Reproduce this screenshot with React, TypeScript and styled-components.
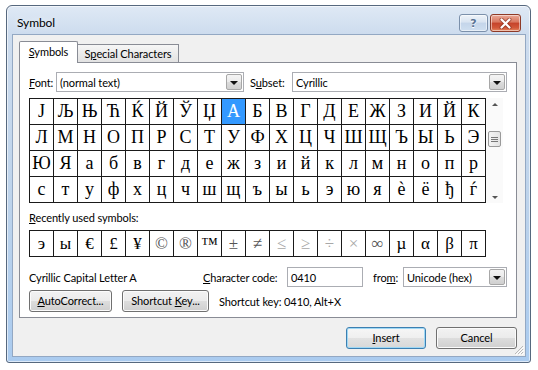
import styled, { createGlobalStyle, css } from "styled-components"

const GlobalStyle = createGlobalStyle`
  body {
    margin: 0;
    background: #fff;
    font-family: Lato, "Noto Sans", sans-serif;
    font-size: 11px;
    letter-spacing: -0.1px;
    color: #000;
  }
`

const symbolRows = [
  "ЈЉЊЋЌЙЎЏАБВГДЕЖЗИЙК",
  "ЛМНОПРСТУФХЦЧШЩЪЫЬЭ",
  "ЮЯабвгдежзийклмнопр",
  "стуфхцчшщъыьэюяѐёђѓ",
]

// tone: 0 = black, 1 = grey, 2 = light grey
const recent: [string, number][] = [
  ["э", 0], ["ы", 0], ["€", 0], ["£", 0], ["¥", 0], ["©", 1], ["®", 1], ["™", 0],
  ["±", 1], ["≠", 1], ["≤", 2], ["≥", 2], ["÷", 2], ["×", 2], ["∞", 1], ["µ", 0],
  ["α", 0], ["β", 0], ["π", 0],
]

const App = () => {
  return (
    <Page>
      <GlobalStyle />
      <Window>
        <TitleBar>
          <Title>Symbol</Title>
          <CaptionButtons>
            <CaptionButton>
              <HelpMark>?</HelpMark>
            </CaptionButton>
            <CaptionButton $close>
              <svg width="13" height="11" viewBox="0 0 13 11">
                <path d="M2.5 1.5 L10.5 9.5 M10.5 1.5 L2.5 9.5" stroke="#7a2616" strokeWidth="4" strokeLinecap="round" opacity="0.55" />
                <path d="M2.5 1.5 L10.5 9.5 M10.5 1.5 L2.5 9.5" stroke="#fff" strokeWidth="2.2" strokeLinecap="round" />
              </svg>
            </CaptionButton>
          </CaptionButtons>
        </TitleBar>

        <Client>
          <TabStrip>
            <Tab $active $w={59}><Key>S</Key>ymbols</Tab>
            <Tab $w={101}>S<Key>p</Key>ecial Characters</Tab>
          </TabStrip>

          <Panel>
            <FieldRow>
              <Label $w={27}><Key>F</Key>ont:</Label>
              <Select $w={188}>
                <span>(normal text)</span>
                <DropButton />
              </Select>
              <Label $w={42} $lead={6}>S<Key>u</Key>bset:</Label>
              <Select $w={215}>
                <span>Cyrillic</span>
                <DropButton />
              </Select>
            </FieldRow>

            <SymbolArea>
              <SymbolGrid>
                {symbolRows.map((row, r) =>
                  Array.from(row).map((ch, c) => (
                    <Cell key={`${r}-${c}`} $selected={r === 0 && c === 8}>
                      {ch}
                    </Cell>
                  ))
                )}
              </SymbolGrid>
              <ScrollBar>
                <ScrollArrow>
                  <ArrowGlyph $up />
                </ScrollArrow>
                <Thumb>
                  <Grip />
                </Thumb>
                <ScrollArrow $bottom>
                  <ArrowGlyph />
                </ScrollArrow>
              </ScrollBar>
            </SymbolArea>

            <SectionLabel><Key>R</Key>ecently used symbols:</SectionLabel>
            <SymbolGrid $recent>
              {recent.map(([ch, tone], i) => (
                <Cell key={i} $tone={tone} $small>
                  {ch}
                </Cell>
              ))}
            </SymbolGrid>

            <InfoRow>
              <Description>Cyrillic Capital Letter A</Description>
              <Label $w={84}><Key>C</Key>haracter code:</Label>
              <TextInput>0410</TextInput>
              <Label $w={30} $lead={10}>fro<Key>m</Key>:</Label>
              <Select $w={104}>
                <span>Unicode (hex)</span>
                <DropButton />
              </Select>
            </InfoRow>

            <ButtonRow>
              <Button $w={83}><Key>A</Key>utoCorrect...</Button>
              <Button $w={87}>Shortcut <Key>K</Key>ey...</Button>
              <ShortcutText>Shortcut key: 0410, Alt+X</ShortcutText>
            </ButtonRow>
          </Panel>

          <Footer>
            <Button $w={80} $default><Key>I</Key>nsert</Button>
            <Button $w={81}>Cancel</Button>
          </Footer>

          <SizeGrip width="11" height="11" viewBox="0 0 11 11">
            <path d="M10 2 L2 10 M10 5 L5 10 M10 8 L8 10" stroke="#b9b9b9" strokeWidth="1" />
            <path d="M11 3 L3 11 M11 6 L6 11 M11 9 L9 11" stroke="#fff" strokeWidth="1" />
          </SizeGrip>
        </Client>
      </Window>
    </Page>
  )
}

const Page = styled.div`
  padding: 5px 0 0 6px;
`

const Window = styled.div`
  box-sizing: border-box;
  width: 525px;
  height: 358px;
  border: 1px solid #56687e;
  border-radius: 6px 6px 3px 3px;
  background: linear-gradient(180deg, #dfe9f5 0px, #cddcee 28px, #bdd3eb 55%, #aacbef 100%);
  box-shadow: inset 0 0 0 1px rgba(255, 255, 255, 0.6);
  padding: 0 4px 5px 5px;
  display: flex;
  flex-direction: column;
`

const TitleBar = styled.div`
  height: 28px;
  flex-shrink: 0;
  display: flex;
  align-items: flex-start;
  padding-left: 5px;
`

const Title = styled.span`
  flex: 1;
  margin-top: 9px;
  font-size: 12px;
  color: #000;
  text-shadow: 0 0 6px rgba(255, 255, 255, 0.9);
`

const CaptionButtons = styled.div`
  display: flex;
  gap: 2px;
  margin-top: 8px;
  margin-right: 5px;
`

const CaptionButton = styled.div<{ $close?: boolean }>`
  box-sizing: border-box;
  width: 29px;
  height: 18px;
  border-radius: 3px;
  display: flex;
  align-items: center;
  justify-content: center;
  border: 1px solid #7b90ab;
  background: linear-gradient(180deg, #eef3f9 0%, #d9e4f1 45%, #c4d5ea 50%, #cfdff0 100%);
  box-shadow: inset 0 0 0 1px rgba(255, 255, 255, 0.5);

  ${(p) =>
    p.$close &&
    css`
      width: 31px;
      border-color: #8e3a27;
      background: linear-gradient(180deg, #eaa897 0%, #d9775f 45%, #c5432a 50%, #d2583a 80%, #e58a62 100%);
    `}
`

const HelpMark = styled.span`
  font-family: "DejaVu Sans", sans-serif;
  font-weight: bold;
  font-size: 11px;
  color: #5a7394;
  text-shadow: 0 1px 0 #fff;
`

const Client = styled.div`
  flex: 1;
  position: relative;
  background: #f0f0f0;
  border: 1px solid #93a8c3;
  padding: 6px 8px 0 6px;
  display: flex;
  flex-direction: column;
`

const TabStrip = styled.div`
  display: flex;
  align-items: flex-end;
  height: 22px;
`

const Tab = styled.div<{ $active?: boolean; $w: number }>`
  box-sizing: border-box;
  width: ${(p) => p.$w}px;
  height: 18px;
  margin-bottom: 1px;
  line-height: 17px;
  text-align: center;
  white-space: nowrap;
  border: 1px solid #898c95;
  border-left: none;
  border-bottom: none;
  background: linear-gradient(180deg, #f6f6f6 0%, #ececec 50%, #e2e2e2 100%);

  ${(p) =>
    p.$active &&
    css`
      height: 22px;
      margin-bottom: 0;
      line-height: 19px;
      border-left: 1px solid #898c95;
      border-radius: 2px 2px 0 0;
      background: #fff;
      position: relative;
      z-index: 1;
    `}
`

const Key = styled.span`
  text-decoration: underline;
`

const Panel = styled.div`
  box-sizing: border-box;
  margin-top: -1px;
  height: 256px;
  border: 1px solid #898c95;
  background: #fff;
  padding: 9px 9px 0 9px;
  display: flex;
  flex-direction: column;
`

const FieldRow = styled.div`
  display: flex;
  align-items: center;
  height: 20px;
`

const Label = styled.span<{ $w: number; $lead?: number }>`
  width: ${(p) => p.$w}px;
  flex-shrink: 0;
  margin-left: ${(p) => p.$lead ?? 0}px;
  white-space: nowrap;
`

const Select = styled.div<{ $w: number }>`
  box-sizing: border-box;
  width: ${(p) => p.$w}px;
  flex-shrink: 0;
  height: 20px;
  border: 1px solid #abadb3;
  background: #fff;
  display: flex;
  align-items: center;
  padding-left: 3px;
  white-space: nowrap;

  span {
    flex: 1;
  }
`

const DropButton = styled.div`
  box-sizing: border-box;
  width: 16px;
  height: 16px;
  margin-right: 1px;
  border: 1px solid #a7a7a7;
  border-radius: 2px;
  background: linear-gradient(180deg, #f4f4f4 0%, #ebebeb 50%, #dcdcdc 51%, #d0d0d0 100%);
  display: flex;
  align-items: center;
  justify-content: center;

  &::after {
    content: "";
    border-left: 4px solid transparent;
    border-right: 4px solid transparent;
    border-top: 4px solid #111;
    margin-top: 1px;
  }
`

const SymbolArea = styled.div`
  display: flex;
  margin-top: 6px;
`

const SymbolGrid = styled.div<{ $recent?: boolean }>`
  display: grid;
  grid-template-columns: repeat(19, 23px);
  grid-auto-rows: 25px;
  gap: 1px;
  align-self: flex-start;
  background: #1a1a1a;
  border: 1px solid #1a1a1a;
  letter-spacing: 0;
  ${(p) =>
    p.$recent &&
    css`
      margin-top: 4px;
    `}
`

const Cell = styled.div<{ $selected?: boolean; $tone?: number; $small?: boolean }>`
  display: flex;
  align-items: center;
  justify-content: center;
  font-family: "Liberation Serif", "Times New Roman", "DejaVu Serif", serif;
  font-size: ${(p) => (p.$small ? 17 : 18)}px;
  background: ${(p) => (p.$selected ? "#3399ff" : "#fff")};
  color: ${(p) => (p.$selected ? "#fff" : p.$tone === 2 ? "#a8a8a8" : p.$tone === 1 ? "#555" : "#000")};
`

const ScrollBar = styled.div`
  width: 17px;
  height: 105px;
  display: flex;
  flex-direction: column;
  align-items: center;
  background: #fafafa;
`

const ScrollArrow = styled.div<{ $bottom?: boolean }>`
  height: 12px;
  width: 100%;
  display: flex;
  align-items: center;
  justify-content: center;
  margin-top: ${(p) => (p.$bottom ? "auto" : "0")};
`

const ArrowGlyph = styled.div<{ $up?: boolean }>`
  border-left: 3px solid transparent;
  border-right: 3px solid transparent;
  ${(p) =>
    p.$up
      ? css`
          border-bottom: 3px solid #555;
        `
      : css`
          border-top: 3px solid #555;
        `}
`

const Thumb = styled.div`
  box-sizing: border-box;
  margin-top: 21px;
  width: 13px;
  height: 16px;
  border: 1px solid #9a9a9a;
  border-radius: 2px;
  background: linear-gradient(90deg, #f4f4f4, #e3e3e3);
  display: flex;
  align-items: center;
  justify-content: center;
`

const Grip = styled.div`
  width: 7px;
  height: 5px;
  background: repeating-linear-gradient(180deg, #777 0px, #777 1px, transparent 1px, transparent 2px);
`

const SectionLabel = styled.div`
  margin-top: 7px;
  line-height: 16px;
`

const InfoRow = styled.div`
  display: flex;
  align-items: center;
  height: 20px;
  margin-top: 10px;
`

const Description = styled.span`
  width: 174px;
  flex-shrink: 0;
  white-space: nowrap;
`

const TextInput = styled.div`
  box-sizing: border-box;
  width: 76px;
  flex-shrink: 0;
  height: 20px;
  border: 1px solid #abadb3;
  background: #fff;
  padding-left: 3px;
  display: flex;
  align-items: center;
`

const ButtonRow = styled.div`
  display: flex;
  align-items: center;
  gap: 10px;
  margin-top: 3px;
`

const Button = styled.div<{ $w: number; $default?: boolean }>`
  box-sizing: border-box;
  width: ${(p) => p.$w}px;
  height: 22px;
  line-height: 20px;
  text-align: center;
  white-space: nowrap;
  border: 1px solid #707070;
  border-radius: 3px;
  background: linear-gradient(180deg, #f2f2f2 0%, #ebebeb 50%, #dddddd 51%, #cfcfcf 100%);
  box-shadow: inset 0 0 0 1px #fbfbfb;

  ${(p) =>
    p.$default &&
    css`
      border-color: #3c7fb1;
      box-shadow: inset 0 0 0 1px #9fd8f5;
      background: linear-gradient(180deg, #f6f6f6 0%, #efefef 50%, #e2e2e2 51%, #d8d8d8 100%);
    `}
`

const ShortcutText = styled.span`
  white-space: nowrap;
`

const Footer = styled.div`
  display: flex;
  justify-content: flex-end;
  gap: 10px;
  margin-top: 9px;
`

const SizeGrip = styled.svg`
  position: absolute;
  right: 1px;
  bottom: 1px;
`

export default App
